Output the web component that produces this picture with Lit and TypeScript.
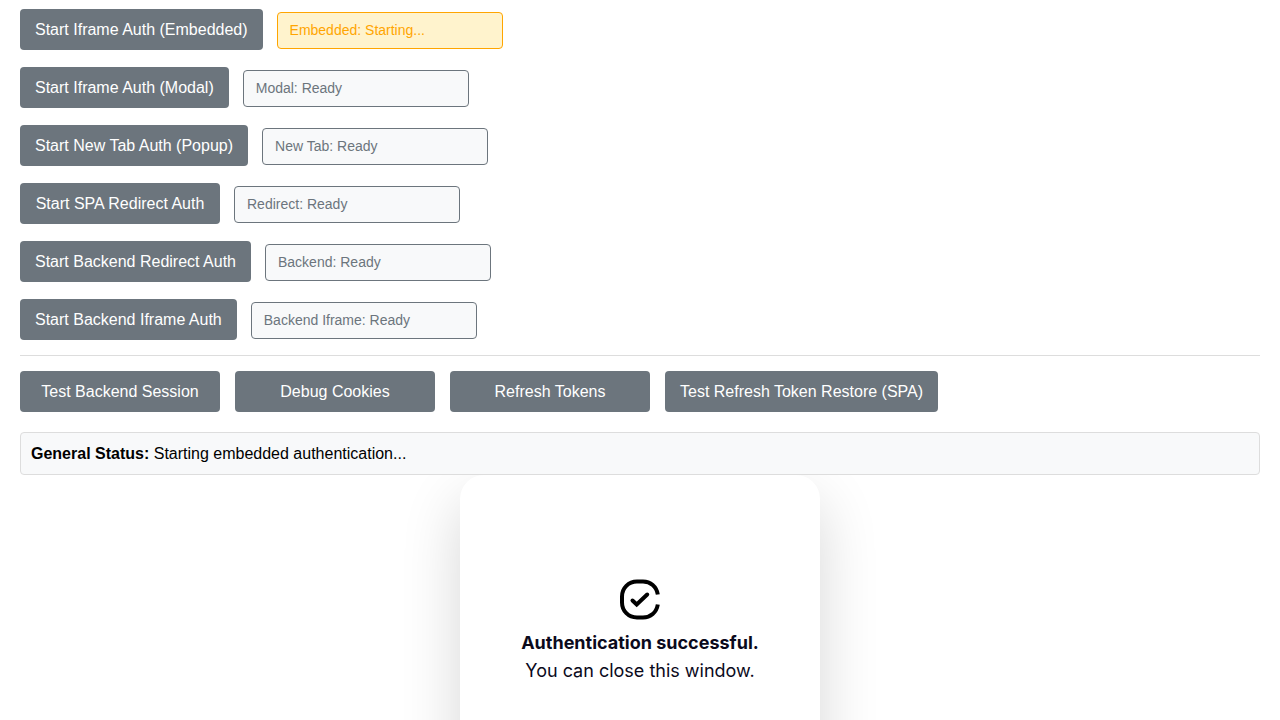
import { LitElement, html, css } from "lit";
import { customElement, state } from "lit/decorators.js";
import { classMap } from "lit/directives/class-map.js";

interface AuthFlow {
  label: string;
  status: string;
  pending: boolean;
}

@customElement("auth-result")
class AuthResult extends LitElement {
  static styles = css`
    :host {
      display: block;
    }
    .card {
      box-sizing: border-box;
      max-width: 360px;
      margin: 0 auto;
      padding: 104px 24px;
      display: flex;
      flex-direction: column;
      align-items: center;
      background: #fff;
      border-radius: 24px;
      box-shadow: 0 25px 60px rgba(0, 0, 0, 0.16);
      color: #0b0a1c;
      font-family: Inter, "Liberation Sans", sans-serif;
      font-size: 18px;
      line-height: 28px;
      text-align: center;
    }
    .mark {
      display: block;
      width: 40px;
      height: 41px;
      margin-bottom: 9px;
    }
    .title,
    .hint {
      margin: 0;
      font-size: 18px;
    }
    .title {
      font-weight: 700;
    }
  `;

  render() {
    return html`
      <section class="card">
        <svg class="mark" viewBox="0 0 40 40" fill="none" stroke="#000" stroke-width="4" aria-hidden="true">
          <path d="M37.8 15C36.5 7 30.5 2 23 2H17C8.5 2 2 8.5 2 17V23C2 31.5 8.500 38 17 38H23C30.5 38 36.5 33 37.8 25" />
          <path d="M12.5 21L16.7 25L27.2 15" stroke-linecap="round" />
        </svg>
        <h1 class="title">Authentication successful.</h1>
        <p class="hint">You can close this window.</p>
      </section>
    `;
  }
}

@customElement("app-root")
class AppRoot extends LitElement {
  static styles = css`
    :host {
      display: flex;
      flex-direction: column;
      box-sizing: border-box;
      height: 100vh;
      overflow: hidden;
      padding: 9px 20px 0;
      background: #fff;
      color: #000;
      font-family: "Liberation Sans", Arial, sans-serif;
      font-size: 16px;
      line-height: 21px;
    }
    .flows {
      display: grid;
      gap: 17px;
      padding-bottom: 15px;
      border-bottom: 1px solid #ddd;
    }
    .flow {
      display: flex;
      align-items: baseline;
      gap: 14px;
    }
    .button {
      min-width: 200px;
      padding: 10px 15px;
      border: 0;
      border-radius: 4px;
      background: #6c757d;
      color: #fff;
      font: inherit;
      cursor: pointer;
    }
    .status {
      box-sizing: border-box;
      width: 226px;
      padding: 8px 12px;
      border: 1px solid #6c757d;
      border-radius: 4px;
      background: #f8f9fa;
      color: #6c757d;
      font-size: 14px;
      line-height: 19px;
    }
    .pending {
      border-color: #ffa500;
      background: #fff3cd;
      color: #ffa500;
    }
    .tools {
      display: flex;
      flex-wrap: wrap;
      gap: 15px;
      padding: 15px 0 20px;
    }
    .general {
      padding: 10px;
      border: 1px solid #ddd;
      border-radius: 4px;
      background: #f8f9fa;
    }
    .frame {
      flex: 1;
      min-height: 0;
      overflow: hidden;
    }
  `;

  @state() private flows: AuthFlow[] = [
    { label: "Start Iframe Auth (Embedded)", status: "Embedded: Starting...", pending: true },
    { label: "Start Iframe Auth (Modal)", status: "Modal: Ready", pending: false },
    { label: "Start New Tab Auth (Popup)", status: "New Tab: Ready", pending: false },
    { label: "Start SPA Redirect Auth", status: "Redirect: Ready", pending: false },
    { label: "Start Backend Redirect Auth", status: "Backend: Ready", pending: false },
    { label: "Start Backend Iframe Auth", status: "Backend Iframe: Ready", pending: false },
  ];

  private tools = [
    "Test Backend Session",
    "Debug Cookies",
    "Refresh Tokens",
    "Test Refresh Token Restore (SPA)",
  ];

  render() {
    return html`
      <div class="flows">
        ${this.flows.map(
          (flow) => html`
            <div class="flow">
              <button class="button" type="button">${flow.label}</button>
              <div class=${classMap({ status: true, pending: flow.pending })} role="status">${flow.status}</div>
            </div>
          `
        )}
      </div>
      <div class="tools">
        ${this.tools.map((tool) => html`<button class="button" type="button">${tool}</button>`)}
      </div>
      <div class="general" role="status"><strong>General Status:</strong> Starting embedded authentication...</div>
      <div class="frame"><auth-result></auth-result></div>
    `;
  }
}
